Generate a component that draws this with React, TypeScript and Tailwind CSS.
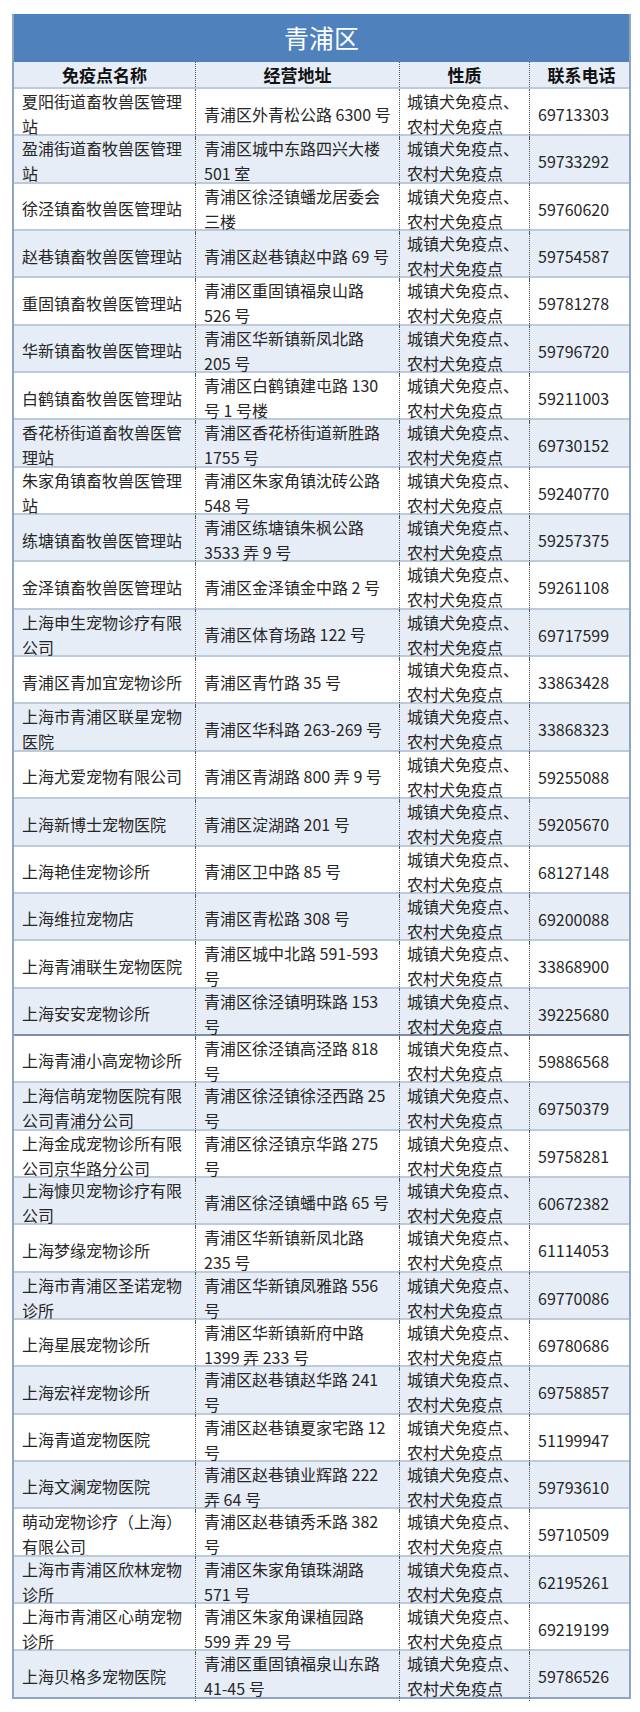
import React from 'react';

type Row = {
  name: string[];
  addr: string[];
  phone: string;
};

const rows: Row[] = [
  { name: ['夏阳街道畜牧兽医管理', '站'], addr: ['青浦区外青松公路 6300 号'], phone: '69713303' },
  { name: ['盈浦街道畜牧兽医管理', '站'], addr: ['青浦区城中东路四兴大楼', '501 室'], phone: '59733292' },
  { name: ['徐泾镇畜牧兽医管理站'], addr: ['青浦区徐泾镇蟠龙居委会', '三楼'], phone: '59760620' },
  { name: ['赵巷镇畜牧兽医管理站'], addr: ['青浦区赵巷镇赵中路 69 号'], phone: '59754587' },
  { name: ['重固镇畜牧兽医管理站'], addr: ['青浦区重固镇福泉山路', '526 号'], phone: '59781278' },
  { name: ['华新镇畜牧兽医管理站'], addr: ['青浦区华新镇新凤北路', '205 号'], phone: '59796720' },
  { name: ['白鹤镇畜牧兽医管理站'], addr: ['青浦区白鹤镇建屯路 130', '号 1 号楼'], phone: '59211003' },
  { name: ['香花桥街道畜牧兽医管', '理站'], addr: ['青浦区香花桥街道新胜路', '1755 号'], phone: '69730152' },
  { name: ['朱家角镇畜牧兽医管理', '站'], addr: ['青浦区朱家角镇沈砖公路', '548 号'], phone: '59240770' },
  { name: ['练塘镇畜牧兽医管理站'], addr: ['青浦区练塘镇朱枫公路', '3533 弄 9 号'], phone: '59257375' },
  { name: ['金泽镇畜牧兽医管理站'], addr: ['青浦区金泽镇金中路 2 号'], phone: '59261108' },
  { name: ['上海申生宠物诊疗有限', '公司'], addr: ['青浦区体育场路 122 号'], phone: '69717599' },
  { name: ['青浦区青加宜宠物诊所'], addr: ['青浦区青竹路 35 号'], phone: '33863428' },
  { name: ['上海市青浦区联星宠物', '医院'], addr: ['青浦区华科路 263-269 号'], phone: '33868323' },
  { name: ['上海尤爱宠物有限公司'], addr: ['青浦区青湖路 800 弄 9 号'], phone: '59255088' },
  { name: ['上海新博士宠物医院'], addr: ['青浦区淀湖路 201 号'], phone: '59205670' },
  { name: ['上海艳佳宠物诊所'], addr: ['青浦区卫中路 85 号'], phone: '68127148' },
  { name: ['上海维拉宠物店'], addr: ['青浦区青松路 308 号'], phone: '69200088' },
  { name: ['上海青浦联生宠物医院'], addr: ['青浦区城中北路 591-593', '号'], phone: '33868900' },
  { name: ['上海安安宠物诊所'], addr: ['青浦区徐泾镇明珠路 153', '号'], phone: '39225680' },
  { name: ['上海青浦小高宠物诊所'], addr: ['青浦区徐泾镇高泾路 818', '号'], phone: '59886568' },
  { name: ['上海信萌宠物医院有限', '公司青浦分公司'], addr: ['青浦区徐泾镇徐泾西路 25', '号'], phone: '69750379' },
  { name: ['上海金成宠物诊所有限', '公司京华路分公司'], addr: ['青浦区徐泾镇京华路 275', '号'], phone: '59758281' },
  { name: ['上海慷贝宠物诊疗有限', '公司'], addr: ['青浦区徐泾镇蟠中路 65 号'], phone: '60672382' },
  { name: ['上海梦缘宠物诊所'], addr: ['青浦区华新镇新凤北路', '235 号'], phone: '61114053' },
  { name: ['上海市青浦区圣诺宠物', '诊所'], addr: ['青浦区华新镇凤雅路 556', '号'], phone: '69770086' },
  { name: ['上海星展宠物诊所'], addr: ['青浦区华新镇新府中路', '1399 弄 233 号'], phone: '69780686' },
  { name: ['上海宏祥宠物诊所'], addr: ['青浦区赵巷镇赵华路 241', '号'], phone: '69758857' },
  { name: ['上海青道宠物医院'], addr: ['青浦区赵巷镇夏家宅路 12', '号'], phone: '51199947' },
  { name: ['上海文澜宠物医院'], addr: ['青浦区赵巷镇业辉路 222', '弄 64 号'], phone: '59793610' },
  { name: ['萌动宠物诊疗（上海）', '有限公司'], addr: ['青浦区赵巷镇秀禾路 382', '号'], phone: '59710509' },
  { name: ['上海市青浦区欣林宠物', '诊所'], addr: ['青浦区朱家角镇珠湖路', '571 号'], phone: '62195261' },
  { name: ['上海市青浦区心萌宠物', '诊所'], addr: ['青浦区朱家角课植园路', '599 弄 29 号'], phone: '69219199' },
  { name: ['上海贝格多宠物医院'], addr: ['青浦区重固镇福泉山东路', '41-45 号'], phone: '59786526' },
];

const Lines = ({ lines }: { lines: string[] }) => (
  <div className="flex flex-col leading-[25px] whitespace-nowrap">
    {lines.map((l, i) => (
      <span key={i}>{l}</span>
    ))}
  </div>
);

const DataRow = ({ row, index }: { row: Row; index: number }) => (
  <div
    className={
      'grid grid-cols-[181px_204px_130px_104px] h-[47.35px] border-t-2 ' +
      (index === 20 ? 'border-[#7d8ea3] ' : 'border-[#bccadb] ') +
      (index % 2 === 1 ? 'bg-[#e6edf6]' : 'bg-white')
    }
  >
    <div className="flex items-center pl-[8px]">
      <Lines lines={row.name} />
    </div>
    <div className="flex items-center pl-[8px] border-l border-dotted border-[#555]">
      <Lines lines={row.addr} />
    </div>
    <div className="flex items-center pl-[7px] border-l border-dotted border-[#555]">
      <Lines lines={['城镇犬免疫点、', '农村犬免疫点']} />
    </div>
    <div className="flex items-center pl-[8px] border-l border-dotted border-[#555]">
      <span>{row.phone}</span>
    </div>
  </div>
);

export default function App() {
  return (
    <div
      className="w-[640px] h-[1712px] bg-white pt-[14px] pl-[12px]"
      style={{ fontFamily: '"Liberation Sans Narrow", "Noto Sans CJK SC", "Noto Sans", sans-serif' }}
    >
      <div className="w-[619px] border-x-2 border-b-2 border-[#8ea5c3] text-[16px] text-[#262626]">
        <div className="h-[48px] bg-[#4f81bd] flex items-center justify-center text-white text-[25px]">
          青浦区
        </div>
        <div className="grid grid-cols-[181px_204px_130px_104px] h-[25px] bg-[#e7edf6] font-bold text-[#111] text-[17px] leading-[25px]">
          <div className="text-center">免疫点名称</div>
          <div className="text-center border-l border-dotted border-[#555]">经营地址</div>
          <div className="text-center border-l border-dotted border-[#555]">性质</div>
          <div className="text-center border-l border-dotted border-[#555]">联系电话</div>
        </div>
        {rows.map((r, i) => (
          <DataRow key={i} row={r} index={i} />
        ))}
      </div>
    </div>
  );
}
